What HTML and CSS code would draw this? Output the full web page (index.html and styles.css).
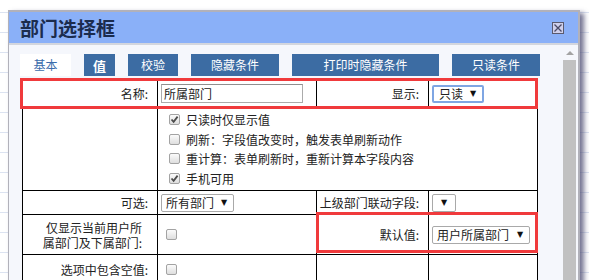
FILE: index.html
```html
<!DOCTYPE html>
<html lang="zh-CN">
<head>
    <meta charset="UTF-8">
    <title>部门选择框</title>
    <link rel="stylesheet" href="styles.css">
</head>
<body>
    <div class="dialog">
        <div class="titlebar">
            <span class="title">部门选择框</span>
            <svg class="close" width="12" height="12" viewBox="0 0 12 12">
                <rect x="0.5" y="0.5" width="11" height="11" fill="#cfd0ec" stroke="#5a5a6e"/>
                <path d="M2.5 2.5 L9.5 9.5 M9.5 2.5 L2.5 9.5" stroke="#4a4a66" stroke-width="1.3"/>
            </svg>
        </div>
        <div class="body">
            <div class="content">
                <div class="tabs">
                    <span class="tab tab-active w-base">基本</span>
                    <span class="tab tab-big w-val">值</span>
                    <span class="tab w-check">校验</span>
                    <span class="tab w-hide">隐藏条件</span>
                    <span class="tab w-print">打印时隐藏条件</span>
                    <span class="tab w-hide">只读条件</span>
                </div>

                <div class="form-wrap">
                    <table class="form">
                        <colgroup>
                            <col class="c1"><col class="c2"><col class="c3"><col class="c4">
                        </colgroup>
                        <tr class="r-name">
                            <td class="label">名称:</td>
                            <td class="value"><span class="txt">所属部门</span></td>
                            <td class="label">显示:</td>
                            <td class="value"><span class="sel sel-focus">只读<i class="arrow">▼</i></span></td>
                        </tr>
                        <tr class="r-opts">
                            <td></td>
                            <td colspan="3" class="opts">
                                <div class="opt"><span class="cb"><svg width="9" height="9" viewBox="0 0 9 9"><path d="M1.5 4.5 L3.6 6.8 L7.6 1.6" fill="none" stroke="#4c4c4c" stroke-width="1.8"/></svg></span>只读时仅显示值</div>
                                <div class="opt"><span class="cb"></span>刷新：字段值改变时，触发表单刷新动作</div>
                                <div class="opt"><span class="cb"></span>重计算：表单刷新时，重新计算本字段内容</div>
                                <div class="opt"><span class="cb"><svg width="9" height="9" viewBox="0 0 9 9"><path d="M1.5 4.5 L3.6 6.8 L7.6 1.6" fill="none" stroke="#4c4c4c" stroke-width="1.8"/></svg></span>手机可用</div>
                            </td>
                        </tr>
                        <tr class="r-select">
                            <td class="label">可选:</td>
                            <td class="value"><span class="sel">所有部门<i class="arrow">▼</i></span></td>
                            <td class="label">上级部门联动字段:</td>
                            <td class="value"><span class="sel sel-empty"><i class="arrow">▼</i></span></td>
                        </tr>
                        <tr class="r-current">
                            <td class="label label-wrap"><div class="line">仅显示当前用户所</div><div class="line">属部门及下属部门:</div></td>
                            <td class="value box-cell"><span class="cb"></span></td>
                            <td class="label">默认值:</td>
                            <td class="value"><span class="sel">用户所属部门<i class="arrow arrow-wide">▼</i></span></td>
                        </tr>
                        <tr class="r-empty">
                            <td class="label">选项中包含空值:</td>
                            <td class="value box-cell"><span class="cb"></span></td>
                            <td></td>
                            <td></td>
                        </tr>
                    </table>
                    <div class="mark mark-name"></div>
                    <div class="mark mark-default"></div>
                </div>
            </div>
            <div class="scrollbar">
                <div class="scroll-up"></div>
                <div class="thumb"></div>
            </div>
        </div>
    </div>
</body>
</html>
```

FILE: styles.css
```css
body {
    margin: 0;
    height: 280px;
    overflow: hidden;
    font-family: "Noto Sans CJK SC", "Liberation Sans", sans-serif;
    font-size: 12px;
    color: #222;
    background-color: #fff;
    background-image: repeating-linear-gradient(to bottom, transparent 0, transparent 12px, #dce3f1 12px, #dce3f1 13px, transparent 13px, transparent 20px);
}

.dialog {
    margin: 10px 0 0 8px;
    width: 572px;
    height: 300px;
    box-sizing: border-box;
    border: 2px solid #b1b1ba;
    border-left-width: 1px;
    background-color: #f5f7fc;
    box-shadow: 4px 3px 5px rgba(70, 70, 110, 0.75);
}

.titlebar {
    height: 31px;
    background-color: #8ab0f8;
    border-bottom: 2px solid #d3d6de;
    display: flex;
    align-items: center;
    justify-content: space-between;
}

.title {
    padding-left: 11px;
    font-size: 19px;
    font-weight: bold;
    color: #1b2c4e;
    line-height: 1;
}

.close {
    margin-right: 14px;
    display: block;
}

.body {
    display: flex;
}

.content {
    flex: 1;
    padding: 9px 0 0 11px;
}

.tabs {
    display: flex;
    gap: 13px;
    height: 22px;
}

.tab {
    display: flex;
    align-items: center;
    justify-content: center;
    background-color: #3c6ca3;
    color: #fff;
    line-height: 1;
}

.tab-active {
    background-color: #fff;
    color: #3a6cab;
}

.tab-big {
    font-size: 13px;
    font-weight: bold;
}

.w-base { width: 51px; }
.w-val { width: 31px; }
.w-check { width: 50px; }
.w-hide { width: 88px; }
.w-print { width: 147px; }

.form-wrap {
    position: relative;
    margin: 3px 0 0 2px;
    width: 515px;
}

.form {
    width: 515px;
    table-layout: fixed;
    border-collapse: collapse;
    background-color: #fff;
}

.c1 { width: 135px; }
.c2 { width: 159px; }
.c3 { width: 112px; }
.c4 { width: 109px; }

.form td {
    border: 1px solid #000;
    padding: 0;
    vertical-align: middle;
    line-height: 15px;
}

.r-name { height: 28px; }
.r-opts { height: 82px; }
.r-select { height: 24px; }
.r-current { height: 40px; }
.r-empty { height: 30px; }

.form td.label {
    text-align: right;
    padding-right: 9px;
}

.form td.label-wrap {
    padding-right: 15px;
}

.line {
    height: 15px;
    overflow: visible;
}

.form td.value {
    padding-left: 3px;
}

.form td.box-cell {
    padding-left: 8px;
}

.form td.opts {
    padding: 2px 0 2px 11px;
}

.opt {
    display: flex;
    align-items: center;
    gap: 6px;
    height: 19.5px;
}

.cb {
    display: flex;
    align-items: center;
    justify-content: center;
    width: 11px;
    height: 11px;
    box-sizing: border-box;
    border: 1px solid #a3a3a3;
    border-radius: 2px;
    background: linear-gradient(to bottom, #fbfbfb, #dedede);
}

.cb svg {
    display: block;
}

.txt {
    display: flex;
    align-items: center;
    width: 142px;
    height: 19px;
    box-sizing: border-box;
    border: 1px solid #ababab;
    border-top-color: #8f8f8f;
    padding-left: 2px;
    margin-top: -1px;
}

.sel {
    display: inline-flex;
    align-items: center;
    height: 18px;
    box-sizing: border-box;
    border: 1px solid #a9a9a9;
    border-radius: 2px;
    padding: 0 6px 0 4px;
    background-color: #fff;
    vertical-align: middle;
}

.sel-focus {
    border: 2px solid #7fa6e3;
    padding-left: 5px;
}

.sel-empty {
    width: 24px;
    justify-content: center;
    padding: 0;
}

.arrow {
    font-style: normal;
    font-family: "DejaVu Sans", sans-serif;
    font-size: 8px;
    margin-left: 7px;
    color: #111;
}

.sel-empty .arrow {
    margin-left: 0;
}

.arrow-wide {
    margin-left: 8px;
}

.mark {
    position: absolute;
    box-sizing: border-box;
    border: 3px solid #f03a3c;
}

.mark-name {
    left: -2px;
    top: -1px;
    width: 518px;
    height: 31px;
}

.mark-default {
    left: 294px;
    top: 133px;
    width: 222px;
    height: 41px;
}

.scrollbar {
    width: 16px;
    position: relative;
}

.scroll-up {
    width: 0;
    height: 0;
    margin: 6px auto 0;
    border-left: 4px solid transparent;
    border-right: 4px solid transparent;
    border-bottom: 4px solid #a3a3a3;
}

.thumb {
    margin: 5px 2px 0 1px;
    height: 240px;
    background-color: #c1c1c1;
}
```
